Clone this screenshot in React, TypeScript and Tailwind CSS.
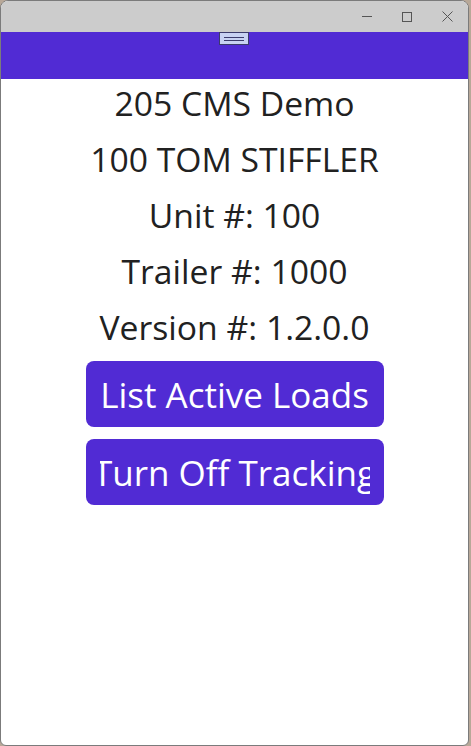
import React from "react";

const lines = [
  "205 CMS Demo",
  "100 TOM STIFFLER",
  "Unit #: 100",
  "Trailer #: 1000",
  "Version #: 1.2.0.0",
];

function TitleBar() {
  return (
    <div className="flex h-[31px] items-center justify-end bg-[#cccccc]">
      <div className="flex h-full w-[40px] items-center justify-center">
        <div className="h-px w-[10px] bg-[#555]" />
      </div>
      <div className="flex h-full w-[40px] items-center justify-center">
        <div className="h-[10px] w-[10px] border border-[#555]" />
      </div>
      <div className="flex h-full w-[41px] items-center justify-center">
        <svg width="11" height="11" viewBox="0 0 11 11" stroke="#555" strokeWidth="1">
          <path d="M0.5 0.5 L10.5 10.5 M10.5 0.5 L0.5 10.5" />
        </svg>
      </div>
    </div>
  );
}

export default function App() {
  return (
    <div className="h-[746px] w-[471px] bg-[#b8a898]">
      <div
        className="flex h-[746px] w-[469px] flex-col overflow-hidden rounded-t-[8px] rounded-b-[6px] border border-[#7b7b7b] bg-white"
        style={{ fontFamily: '"Open Sans", sans-serif' }}
      >
        <TitleBar />
        <div className="relative h-[47px] bg-[#512bd4]">
          <div className="absolute left-[218px] top-0 flex h-[13px] w-[30px] flex-col items-center justify-center gap-[2px] border border-[#3b3b6b] bg-[#c8d2f2]">
            <div className="h-px w-[20px] bg-[#3b3b6b]" />
            <div className="h-px w-[20px] bg-[#3b3b6b]" />
          </div>
        </div>
        <div className="flex flex-col items-center gap-[6px] text-[33.7px] text-[#212121]">
          {lines.map((l) => (
            <div key={l} className="flex h-[50px] items-center leading-none">
              {l}
            </div>
          ))}
          <div className="mt-[2px] flex flex-col gap-[12px]">
            {["List Active Loads", "Turn Off Tracking"].map((b) => (
              <div
                key={b}
                className="flex h-[66px] w-[298px] items-center rounded-[8px] bg-[#512bd4] px-[14px] text-[35px] font-medium text-white"
              >
                <div className="flex w-full justify-center overflow-hidden whitespace-nowrap leading-[1.4]">
                  {b}
                </div>
              </div>
            ))}
          </div>
        </div>
      </div>
    </div>
  );
}
